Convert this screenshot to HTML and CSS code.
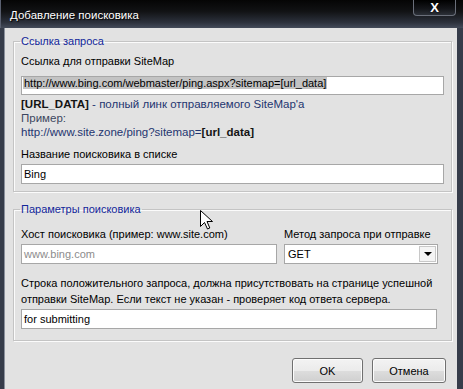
FILE: index.html
```html
<!DOCTYPE html>
<html lang="ru">
<head>
    <meta charset="UTF-8">
    <title>Добавление поисковика</title>
    <link rel="stylesheet" href="styles.css">
</head>
<body>
    <div class="window">
        <div class="titlebar">
            <span class="title">Добавление поисковика</span>
            <span class="close">X</span>
        </div>

        <div class="client">
            <fieldset class="group">
                <legend>Ссылка запроса</legend>
                <div class="label">Ссылка для отправки SiteMap</div>
                <div class="field field-top"><span class="selected">http://www.bing.com/webmaster/ping.aspx?sitemap=[url_data]</span></div>
                <p class="hint hint-first"><b>[URL_DATA]</b> - полный линк отправляемого SiteMap'a</p>
                <p class="hint hint-muted">Пример:</p>
                <p class="hint">http://www.site.zone/ping?sitemap=<b>[url_data]</b></p>
                <div class="label label-gap">Название поисковика в списке</div>
                <div class="field">Bing</div>
            </fieldset>

            <fieldset class="group group-params">
                <legend>Параметры поисковика</legend>
                <div class="row">
                    <div class="col col-host">
                        <div class="label">Хост поисковика (пример: www.site.com)</div>
                        <div class="field field-grey">www.bing.com</div>
                    </div>
                    <div class="col col-method">
                        <div class="label">Метод запроса при отправке</div>
                        <div class="select">
                            <span class="select-value">GET</span>
                            <span class="select-btn"><span class="arrow"></span></span>
                        </div>
                    </div>
                </div>
                <p class="note">Строка положительного запроса, должна присутствовать на странице успешной<br>отправки SiteMap. Если текст не указан - проверяет код ответа сервера.</p>
                <div class="field field-short">for submitting</div>
            </fieldset>

            <div class="buttons">
                <button class="btn btn-ok">OK</button>
                <button class="btn btn-cancel">Отмена</button>
            </div>

            <svg class="cursor" width="13" height="20" viewBox="0 0 13 20">
                <path d="M0.5 0.5 L0.5 16.5 L4.5 12.5 L7.5 19 L9.8 18 L7 11.5 L12.5 11.5 Z" fill="#fff" stroke="#000" stroke-width="1"/>
            </svg>
        </div>
    </div>
</body>
</html>
```

FILE: styles.css
```css
:root {
    --client: #e2e2e2;
    --frame: #363c4a;
    --group-text: #13279a;
    --hint: #1f3570;
    --field-border: #a7a7a7;
}

body {
    margin: 0;
    font-family: 'Liberation Sans', Arial, sans-serif;
    font-size: 11px;
    color: #000;
    background: #000;
}

.window {
    width: 463px;
    height: 389px;
    display: flex;
    flex-direction: column;
    overflow: hidden;
}

.titlebar {
    height: 28px;
    flex: none;
    display: flex;
    justify-content: space-between;
    align-items: flex-start;
    background: linear-gradient(#050505 0%, #111214 40%, #2c313c 80%, #444b5a 100%);
    border-left: 1px solid #5a6070;
}

.title {
    color: #fff;
    font-size: 11.5px;
    margin: 9px 0 0 9px;
    text-shadow: 1px 1px 1px #000;
}

.close {
    width: 41px;
    height: 15px;
    margin-right: 7px;
    border: 1px solid #6a6f7a;
    border-top: none;
    border-radius: 0 0 4px 4px;
    background: linear-gradient(#000 0%, #15171b 60%, #2c3038 100%);
    color: #fff;
    font-weight: bold;
    font-size: 13px;
    text-align: center;
    line-height: 15px;
    text-shadow: 0 0 2px #000;
}

.client {
    flex: 1;
    position: relative;
    background: var(--client);
    border-left: 4px solid var(--frame);
    border-right: 6px solid var(--frame);
    box-shadow: inset 1px 0 0 #8a909c;
    padding: 6px 5px 0 9px;
}

.group {
    margin: 0;
    padding: 6px 7px 7px;
    border: 1px solid #c4c4c4;
    box-shadow: 1px 1px 0 #fbfbfb, inset 1px 1px 0 #fbfbfb;
    min-width: 0;
}

.group legend {
    padding: 0 1px;
    margin-left: -1px;
    line-height: 14px;
    color: var(--group-text);
}

.group-params {
    margin-top: 10px;
    padding-bottom: 11px;
}

.label {
    line-height: 14px;
    white-space: nowrap;
}

.label-gap {
    margin-top: 8px;
}

.field {
    height: 20px;
    box-sizing: border-box;
    margin-top: 3px;
    border: 1px solid var(--field-border);
    background: #fff;
    padding: 2px 2px;
    line-height: 14px;
    white-space: nowrap;
    overflow: hidden;
}

.field-top {
    margin-top: 8px;
    height: 19px;
    padding: 0 1px;
    line-height: 13px;
}

.selected {
    background: #c3c3c3;
    padding: 0 1px;
}

.field-grey {
    color: #8c8c8c;
}

.field-short {
    margin-right: 7px;
    margin-top: 2px;
}

.hint {
    margin: 0;
    line-height: 14px;
    font-size: 11.5px;
    color: var(--hint);
}

.hint b {
    color: #141414;
}

.hint-first {
    margin-top: 2px;
}

.hint-muted {
    color: #3c4660;
}

.row {
    display: flex;
    gap: 7px;
    margin-top: 5px;
}

.col-host {
    width: 256px;
}

.col-method {
    width: 154px;
}

.select {
    height: 20px;
    box-sizing: border-box;
    margin-top: 3px;
    border: 1px solid var(--field-border);
    background: #fff;
    display: flex;
    align-items: center;
    justify-content: space-between;
    padding: 0 1px 0 3px;
}

.select-btn {
    width: 17px;
    height: 16px;
    box-sizing: border-box;
    border: 1px solid #c8c8c8;
    background: #f4f4f4;
    display: flex;
    align-items: center;
    justify-content: center;
}

.arrow {
    width: 0;
    height: 0;
    border-left: 4px solid transparent;
    border-right: 4px solid transparent;
    border-top: 4px solid #000;
}

.note {
    margin: 11px 7px 0 0;
    line-height: 16px;
    white-space: nowrap;
}

.buttons {
    display: flex;
    justify-content: flex-end;
    gap: 9px;
    margin-top: 17px;
    padding-right: 6px;
}

.btn {
    height: 25px;
    font-family: inherit;
    font-size: 11px;
    color: #000;
    border: 1px solid #707070;
    border-radius: 3px;
    background: linear-gradient(#f3f3f3 0%, #ebebeb 50%, #dddddd 51%, #cfcfcf 100%);
    box-shadow: inset 0 0 0 1px #fcfcfc;
    padding: 0;
}

.btn-ok {
    width: 71px;
}

.btn-cancel {
    width: 74px;
}

.cursor {
    position: absolute;
    left: 196px;
    top: 182px;
}
```
